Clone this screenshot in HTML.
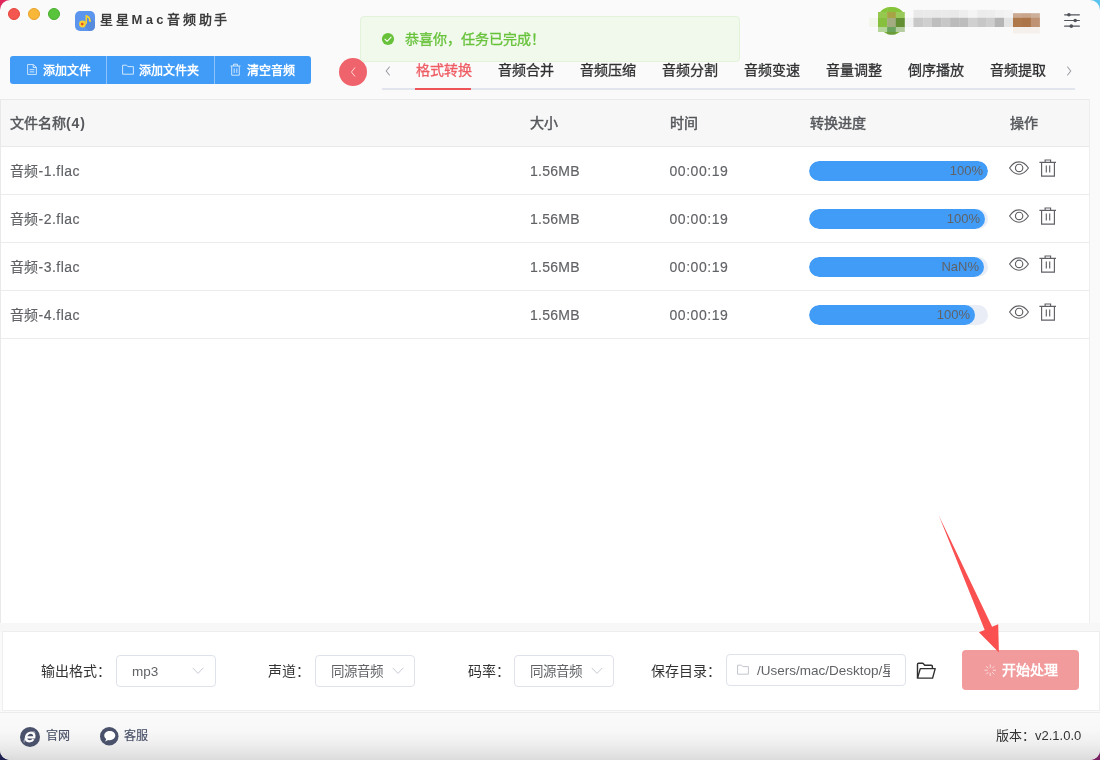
<!DOCTYPE html>
<html lang="zh-CN">
<head>
<meta charset="utf-8">
<title>星星Mac音频助手</title>
<style>
*{box-sizing:border-box;margin:0;padding:0}
html,body{width:1100px;height:760px;overflow:hidden}
body{font-family:"Liberation Sans",sans-serif;position:relative;background:#fafafa;color:#333}
.abs{position:absolute}
.t{position:absolute;white-space:nowrap;line-height:20px;height:20px}
/* desktop corners behind rounded window */
.corner{position:absolute;width:14px;height:14px}
#win{position:absolute;left:0;top:0;width:1100px;height:760px;border-radius:10px;background:#fafafa;overflow:hidden;will-change:transform}
.tl{position:absolute;top:8px;width:12px;height:12px;border-radius:50%}
/* toolbar buttons */
#btns{position:absolute;left:10px;top:56px;width:301px;height:28px;background:#419cf8;border-radius:3px}
#btns .sep{position:absolute;top:0;width:1px;height:28px;background:#8cc3f9}
#btns .t{color:#fff;font-size:12px;font-weight:bold;top:4.500px}
/* tabs */
.tab{position:absolute;top:60px;font-size:14px;-webkit-text-stroke:.3px;line-height:20px;white-space:nowrap;color:#303133}
/* table */
#table{position:absolute;left:0;top:99px;width:1090px;height:524px;background:#fff;border-left:1px solid #e9e9e9;border-right:1px solid #eeeeee}
#thead{position:absolute;left:0;top:0;width:1088px;height:48px;background:#f7f7f7;border-top:1px solid #e9e9eb;border-bottom:1px solid #e9e9eb}
.row{position:absolute;left:0;width:1088px;height:48px;border-bottom:1px solid #ececee}
.th{position:absolute;top:13px;font-size:14px;-webkit-text-stroke:.45px;color:#55575b;line-height:20px;white-space:nowrap}
.td{position:absolute;top:14px;font-size:14px;letter-spacing:.25px;-webkit-text-stroke:.15px;color:#606266;line-height:20px;white-space:nowrap}
.bar{position:absolute;left:808px;top:14px;width:179px;height:20px;border-radius:10px;background:#e9edf6;overflow:hidden}
.fill{position:absolute;left:0;top:0;height:20px;border-radius:10px;background:#419cf8}
.fill span{position:absolute;right:5px;top:0;line-height:20px;font-size:13px;color:#606266}
/* bottom panel */
#panel{position:absolute;left:2px;top:631px;width:1098px;height:80px;background:#fff;border:1px solid #eeeeee}
.lbl{position:absolute;font-size:14px;color:#333;line-height:20px;white-space:nowrap;top:29px}
.sel{position:absolute;top:23px;height:32px;border:1px solid #dfe2ea;border-radius:4px;background:#fff}
.sel .t{top:5.700px;font-size:13.500px;color:#606266}
#foot{position:absolute;left:0;top:712px;width:1100px;height:48px;border-top:1px solid #ececec;background:linear-gradient(#fafafa 0%,#f8f8f8 35%,#f0f0f0 62%,#e4e4e4 86%,#dbdbdb 100%)}
</style>
</head>
<body>
<div class="corner" style="left:0;top:0;background:#e0275d"></div>
<div class="corner" style="right:0;top:0;background:#5ac3ee"></div>
<div class="corner" style="left:0;bottom:0;background:#1e2050"></div>
<div class="corner" style="right:0;bottom:0;background:#7a1f62"></div>
<div id="win">

<!-- title bar -->
<div class="tl" style="left:8px;background:#f3574f;border:1px solid #e5453d"></div>
<div class="tl" style="left:28px;background:#f9b73a;border:1px solid #e6a229"></div>
<div class="tl" style="left:48px;background:#58c43c;border:1px solid #48ad2e"></div>
<svg class="abs" style="left:75px;top:11px" width="20" height="20" viewBox="0 0 20 20">
  <rect width="20" height="20" rx="5" fill="#5c95ee"/>
  <path d="M9.5 15.5 L12 4.5 L15.6 6.6 L20 11 L20 15 Q20 20 15 20 L14 20 Z" fill="#5588d8" opacity=".75"/>
  <path d="M10.5 4.3 L12 4 L12 12.8 L10.5 12.8 Z" fill="#f8d22f"/>
  <path d="M11.3 4 C13.6 4.6 15.8 6 15.9 10.9 C15.3 11.4 14.2 11 13.9 10.1 C14.2 7.6 13.2 6.6 11.6 6.5 Z" fill="#f8d22f"/>
  <circle cx="7.5" cy="13" r="3.4" fill="#f8d22f"/>
  <circle cx="7.2" cy="13.1" r="1.3" fill="#e8452a"/>
</svg>
<div class="t" style="left:100px;top:10px;font-size:13px;font-weight:bold;letter-spacing:2.75px;color:#3c3c3c">星星<span style="letter-spacing:3.4px">Mac</span>音频助手</div>

<!-- avatar / user (pixelated) -->
<svg class="abs" style="left:866px;top:5px" width="42" height="32" viewBox="0 0 42 32">
  <defs><clipPath id="avc"><path d="M12 7H14.200C17 3.200 21 1.900 25.500 1.900C30 1.900 34 3.200 36.900 7H38.800V27H33.600C31 29 28.500 29.800 25.800 29.800C23 29.800 20.500 29 18 27H12Z"/></clipPath></defs>
  <rect x="3" y="13" width="9" height="9" fill="#f3f6ea"/>
  <g clip-path="url(#avc)"><rect x="12.0" y="1.5" width="9.4" height="5.7" fill="#86c43a"/><rect x="21.1" y="1.5" width="9.0" height="5.7" fill="#86c43a"/><rect x="29.8" y="1.5" width="9.3" height="5.7" fill="#86c43a"/><rect x="12.0" y="6.9" width="9.4" height="6.4" fill="#96c850"/><rect x="21.1" y="6.9" width="9.0" height="6.4" fill="#a8a445"/><rect x="29.8" y="6.9" width="9.3" height="6.4" fill="#9aca5c"/><rect x="12.0" y="13.0" width="9.4" height="9.3" fill="#86c03c"/><rect x="21.1" y="13.0" width="9.0" height="9.3" fill="#a3ac80"/><rect x="29.8" y="13.0" width="9.3" height="9.3" fill="#648f32"/><rect x="12.0" y="22.0" width="9.4" height="5.3" fill="#b4d698"/><rect x="21.1" y="22.0" width="9.0" height="5.3" fill="#6aa45c"/><rect x="29.8" y="22.0" width="9.3" height="5.3" fill="#b4cca0"/><rect x="12.0" y="27.0" width="9.4" height="3.5" fill="#7ab030"/><rect x="21.1" y="27.0" width="9.0" height="3.5" fill="#6a9c3a"/><rect x="29.8" y="27.0" width="9.3" height="3.5" fill="#7ab030"/></g>
</svg>
<svg class="abs" style="left:904px;top:9px" width="138" height="26" viewBox="0 0 138 26"><rect x="1" y="8.8" width="9" height="9.200" fill="#f1f1f1"/><rect x="9.5" y="0.9" width="10.1" height="8.200" fill="#e9e9e9"/><rect x="9.5" y="8.8" width="10.1" height="9.200" fill="#c8c8c8"/><rect x="19.3" y="0.9" width="9.0" height="8.200" fill="#eaeaea"/><rect x="19.3" y="8.8" width="9.0" height="9.200" fill="#cfcfcf"/><rect x="28.0" y="0.9" width="9.5" height="8.200" fill="#e9e9e9"/><rect x="28.0" y="8.8" width="9.5" height="9.200" fill="#bebebe"/><rect x="37.2" y="0.9" width="9.2" height="8.200" fill="#eaeaea"/><rect x="37.2" y="8.8" width="9.2" height="9.200" fill="#c7c7c7"/><rect x="46.1" y="0.9" width="9.5" height="8.200" fill="#e9e9e9"/><rect x="46.1" y="8.8" width="9.5" height="9.200" fill="#bbbbbb"/><rect x="55.3" y="0.9" width="9.0" height="8.200" fill="#eeeeee"/><rect x="55.3" y="8.8" width="9.0" height="9.200" fill="#bdbdbd"/><rect x="64.0" y="0.9" width="9.5" height="8.200" fill="#f4f4f4"/><rect x="64.0" y="8.8" width="9.5" height="9.200" fill="#d0d0d0"/><rect x="73.2" y="0.9" width="9.2" height="8.200" fill="#ececec"/><rect x="73.2" y="8.8" width="9.2" height="9.200" fill="#c7c7c7"/><rect x="82.1" y="0.9" width="9.0" height="8.200" fill="#ededed"/><rect x="82.1" y="8.8" width="9.0" height="9.200" fill="#cecece"/><rect x="90.8" y="0.9" width="9.5" height="8.200" fill="#f1f1f1"/><rect x="90.8" y="8.8" width="9.5" height="9.200" fill="#b5b5b5"/><rect x="100.0" y="0.9" width="9.0" height="8.200" fill="#f3f3f3"/><rect x="100.0" y="8.8" width="9.0" height="9.200" fill="#e4e4e4"/><rect x="109.0" y="4.2" width="9.2" height="4.900" fill="#cba990"/><rect x="109.0" y="8.8" width="9.2" height="9.200" fill="#af784b"/><rect x="109.0" y="18.0" width="9.2" height="6.500" fill="#f5f0ec"/><rect x="117.9" y="4.2" width="9.2" height="4.900" fill="#c9a58c"/><rect x="117.9" y="8.8" width="9.2" height="9.200" fill="#ad7547"/><rect x="117.9" y="18.0" width="9.2" height="6.500" fill="#f5f0ec"/><rect x="126.8" y="4.2" width="9.1" height="4.900" fill="#cdb09c"/><rect x="126.8" y="8.8" width="9.1" height="9.200" fill="#be9272"/><rect x="126.8" y="18.0" width="9.1" height="6.500" fill="#f5f0ec"/></svg>
<!-- settings sliders icon -->
<svg class="abs" style="left:1063px;top:11px" width="18" height="18" viewBox="0 0 18 18" fill="none" stroke="#50535a" stroke-width="1.150" stroke-linecap="round">
  <path d="M1.600 3.800H16.400M1.600 9.450H16.400M1.600 15.150H16.400"/>
  <circle cx="5.900" cy="3.800" r="1.800" fill="#50535a" stroke="none"/>
  <circle cx="12.200" cy="9.450" r="1.800" fill="#50535a" stroke="none"/>
  <circle cx="8.300" cy="15.150" r="1.800" fill="#50535a" stroke="none"/>
</svg>

<!-- toolbar buttons -->
<div id="btns">
  <div class="sep" style="left:96px"></div>
  <div class="sep" style="left:204px"></div>
  <svg class="abs" style="left:17px;top:8px" width="10" height="11" preserveAspectRatio="none" viewBox="0 0 10 12" fill="none" stroke="#e8f3fe" stroke-width=".85"><path d="M.6.6H6.4L9.4 3.6V11.4H.6Z"/><path d="M6.2.8V3.8H9.2M2.6 6.2H7.4M2.6 8.6H7.4" stroke-width=".9"/></svg>
  <div class="t" style="left:33px">添加文件</div>
  <svg class="abs" style="left:112px;top:8px" width="12" height="11" viewBox="0 0 12 11" fill="none" stroke="#e8f3fe" stroke-width=".85"><path d="M.6 1.2H4.6L5.8 2.6H11.4V10.2H.6Z"/></svg>
  <div class="t" style="left:129px">添加文件夹</div>
  <svg class="abs" style="left:220px;top:7px" width="11" height="13" viewBox="0 0 11 13" fill="none" stroke="#e8f3fe" stroke-width=".85"><path d="M.5 3H10.5M3.6 3V1.2H7.4V3M1.7 3.2V12.2H9.3V3.2M4.2 5.4V10M6.8 5.4V10"/></svg>
  <div class="t" style="left:237px">清空音频</div>
</div>

<!-- collapse round button -->
<div class="abs" style="left:339px;top:58px;width:28px;height:28px;border-radius:50%;background:#ef646c"></div>
<svg class="abs" style="left:348.700px;top:65.600px" width="8" height="12" viewBox="0 0 8 12" fill="none" stroke="#fde4e5" stroke-width=".9" stroke-linecap="round" stroke-linejoin="round"><path d="M5.800 1.800L2.400 6L5.800 10.200"/></svg>

<!-- tabs -->
<div class="abs" style="left:382px;top:88px;width:693px;height:2px;background:#e2e5ee"></div>
<div class="abs" style="left:415px;top:88px;width:56px;height:2px;background:#ee5358"></div>
<svg class="abs" style="left:384px;top:65px" width="8" height="12" viewBox="0 0 8 12" fill="none" stroke="#9a9da3" stroke-width="1.1" stroke-linecap="round" stroke-linejoin="round"><path d="M5.400 2L2.200 6L5.400 10"/></svg>
<svg class="abs" style="left:1065px;top:65px" width="8" height="12" viewBox="0 0 8 12" fill="none" stroke="#9a9da3" stroke-width="1.1" stroke-linecap="round" stroke-linejoin="round"><path d="M2.600 2L5.800 6L2.600 10"/></svg>
<div class="tab" style="left:416px;color:#ee5c64">格式转换</div>
<div class="tab" style="left:498px">音频合并</div>
<div class="tab" style="left:580px">音频压缩</div>
<div class="tab" style="left:662px">音频分割</div>
<div class="tab" style="left:744px">音频变速</div>
<div class="tab" style="left:826px">音量调整</div>
<div class="tab" style="left:908px">倒序播放</div>
<div class="tab" style="left:990px">音频提取</div>

<!-- success message -->
<div class="abs" style="left:360px;top:16px;width:380px;height:46px;background:#f0f9eb;border:1px solid #e3f3d9;border-radius:4px"></div>
<svg class="abs" style="left:381px;top:32.3px" width="14" height="14" viewBox="0 0 14 14"><circle cx="7" cy="7" r="6.1" fill="#67c23a"/><path d="M3.9 7.2L6.1 9.3L10.1 5.2" fill="none" stroke="#fff" stroke-width="1.050" stroke-linecap="round" stroke-linejoin="round"/></svg>
<div class="t" style="left:405px;top:29px;font-size:14px;-webkit-text-stroke:.3px;color:#67c23a">恭喜你，任务已完成！</div>

<!-- table -->
<div id="table">
  <div id="thead">
    <div class="th" style="left:9px">文件名称<span style="letter-spacing:.9px;font-weight:bold;-webkit-text-stroke:0">(4)</span></div>
    <div class="th" style="left:529px">大小</div>
    <div class="th" style="left:669px">时间</div>
    <div class="th" style="left:809px">转换进度</div>
    <div class="th" style="left:1009px">操作</div>
  </div>
  <div class="row" style="top:48px">
    <div class="td" style="left:8.500px;letter-spacing:.5px">音频-1.flac</div>
    <div class="td" style="left:529px">1.56MB</div>
    <div class="td" style="left:668.500px;letter-spacing:.55px">00:00:19</div>
    <div class="bar"><div class="fill" style="width:179px"><span>100%</span></div></div>
    <svg class="abs" style="left:1008px;top:14px" width="20" height="14" viewBox="0 0 20 14" fill="none" stroke="#5f6166" stroke-width="1.150"><path d="M.600 7C3.500 2.600 6.600 .800 10 .800S16.500 2.600 19.400 7C16.500 11.400 13.400 13.200 10 13.200S3.500 11.400 .600 7Z"/><circle cx="10.100" cy="6.900" r="3.700"/></svg>
    <svg class="abs" style="left:1038px;top:12px" width="18" height="18" viewBox="0 0 18 18" fill="none" stroke="#5f6166" stroke-width="1.150"><path d="M.400 3.300H17M6.100 3.200V1H11.600V3.200M2.600 3.500V17.100H15.400V3.500M7.300 6.500V13.500M10.700 6.500V13.500"/></svg>
  </div>
  <div class="row" style="top:96px">
    <div class="td" style="left:8.500px;letter-spacing:.5px">音频-2.flac</div>
    <div class="td" style="left:529px">1.56MB</div>
    <div class="td" style="left:668.500px;letter-spacing:.55px">00:00:19</div>
    <div class="bar"><div class="fill" style="width:176px"><span>100%</span></div></div>
    <svg class="abs" style="left:1008px;top:14px" width="20" height="14" viewBox="0 0 20 14" fill="none" stroke="#5f6166" stroke-width="1.150"><path d="M.600 7C3.500 2.600 6.600 .800 10 .800S16.500 2.600 19.400 7C16.500 11.400 13.400 13.200 10 13.200S3.500 11.400 .600 7Z"/><circle cx="10.100" cy="6.900" r="3.700"/></svg>
    <svg class="abs" style="left:1038px;top:12px" width="18" height="18" viewBox="0 0 18 18" fill="none" stroke="#5f6166" stroke-width="1.150"><path d="M.400 3.300H17M6.100 3.200V1H11.600V3.200M2.600 3.500V17.100H15.400V3.500M7.300 6.500V13.500M10.700 6.500V13.500"/></svg>
  </div>
  <div class="row" style="top:144px">
    <div class="td" style="left:8.500px;letter-spacing:.5px">音频-3.flac</div>
    <div class="td" style="left:529px">1.56MB</div>
    <div class="td" style="left:668.500px;letter-spacing:.55px">00:00:19</div>
    <div class="bar"><div class="fill" style="width:175px"><span>NaN%</span></div></div>
    <svg class="abs" style="left:1008px;top:14px" width="20" height="14" viewBox="0 0 20 14" fill="none" stroke="#5f6166" stroke-width="1.150"><path d="M.600 7C3.500 2.600 6.600 .800 10 .800S16.500 2.600 19.400 7C16.500 11.400 13.400 13.200 10 13.200S3.500 11.400 .600 7Z"/><circle cx="10.100" cy="6.900" r="3.700"/></svg>
    <svg class="abs" style="left:1038px;top:12px" width="18" height="18" viewBox="0 0 18 18" fill="none" stroke="#5f6166" stroke-width="1.150"><path d="M.400 3.300H17M6.100 3.200V1H11.600V3.200M2.600 3.500V17.100H15.400V3.500M7.300 6.500V13.500M10.700 6.500V13.500"/></svg>
  </div>
  <div class="row" style="top:192px">
    <div class="td" style="left:8.500px;letter-spacing:.5px">音频-4.flac</div>
    <div class="td" style="left:529px">1.56MB</div>
    <div class="td" style="left:668.500px;letter-spacing:.55px">00:00:19</div>
    <div class="bar"><div class="fill" style="width:166px"><span>100%</span></div></div>
    <svg class="abs" style="left:1008px;top:14px" width="20" height="14" viewBox="0 0 20 14" fill="none" stroke="#5f6166" stroke-width="1.150"><path d="M.600 7C3.500 2.600 6.600 .800 10 .800S16.500 2.600 19.400 7C16.500 11.400 13.400 13.200 10 13.200S3.500 11.400 .600 7Z"/><circle cx="10.100" cy="6.900" r="3.700"/></svg>
    <svg class="abs" style="left:1038px;top:12px" width="18" height="18" viewBox="0 0 18 18" fill="none" stroke="#5f6166" stroke-width="1.150"><path d="M.400 3.300H17M6.100 3.200V1H11.600V3.200M2.600 3.500V17.100H15.400V3.500M7.300 6.500V13.500M10.700 6.500V13.500"/></svg>
  </div>
</div>
<div class="abs" style="left:0;top:622.500px;width:1100px;height:9px;background:#f7f7f7"></div>

<!-- bottom panel -->
<div id="panel">
  <div class="lbl" style="left:38px">输出格式：</div>
  <div class="sel" style="left:113px;width:100px"><div class="t" style="left:15px">mp3</div>
    <svg class="abs" style="left:75px;top:11px" width="12" height="8" viewBox="0 0 12 8" fill="none" stroke="#c6cad2" stroke-width="1" stroke-linecap="round" stroke-linejoin="round"><path d="M1 1.2L6 6.4L11 1.2"/></svg></div>
  <div class="lbl" style="left:265px">声道：</div>
  <div class="sel" style="left:312px;width:100px"><div class="t" style="left:15px">同源音频</div>
    <svg class="abs" style="left:76px;top:11px" width="12" height="8" viewBox="0 0 12 8" fill="none" stroke="#c6cad2" stroke-width="1" stroke-linecap="round" stroke-linejoin="round"><path d="M1 1.2L6 6.4L11 1.2"/></svg></div>
  <div class="lbl" style="left:465px">码率：</div>
  <div class="sel" style="left:511px;width:100px"><div class="t" style="left:15px">同源音频</div>
    <svg class="abs" style="left:76px;top:11px" width="12" height="8" viewBox="0 0 12 8" fill="none" stroke="#c6cad2" stroke-width="1" stroke-linecap="round" stroke-linejoin="round"><path d="M1 1.2L6 6.4L11 1.2"/></svg></div>
  <div class="lbl" style="left:648px">保存目录：</div>
  <div class="sel" style="left:723px;top:22px;width:180px;overflow:hidden">
    <svg class="abs" style="left:10px;top:8.500px" width="12" height="11" viewBox="0 0 12 11" fill="none" stroke="#c2c6cd" stroke-width="1"><path d="M.6 1.2H4.6L5.8 2.6H11.4V10.2H.6Z"/></svg>
    <div class="t" style="left:30px;top:6.200px;width:132.500px;overflow:hidden">/Users/mac/Desktop/星星</div></div>
  <svg class="abs" style="left:912.500px;top:29.500px" width="20.500" height="17.500" preserveAspectRatio="none" viewBox="0 0 22 18" fill="none" stroke="#2f2f2f" stroke-width="1.5" stroke-linejoin="round"><path d="M1.6 16.4V2.4Q1.6 1.2 2.8 1.2H7.4L9.4 3.4H16.4Q17.6 3.4 17.6 4.6V6.6"/><path d="M1.6 16.6L4.6 6.8H20.6L17.8 16.6Z"/></svg>
  <div class="abs" style="left:959px;top:18px;width:117px;height:40px;border-radius:4px;background:#f29b9d"></div>
  <svg class="abs" style="left:980.500px;top:32px" width="12.500" height="12.500" viewBox="0 0 14 14" stroke="#fbdcdd" stroke-width="1.1" stroke-linecap="round"><path d="M7 1V3.6M7 10.4V13M1 7H3.6M10.4 7H13M2.8 2.8L4.6 4.6M9.4 9.4L11.2 11.2M2.8 11.2L4.6 9.4M9.4 4.6L11.2 2.8"/></svg>
  <div class="t" style="left:999px;top:28px;font-size:14px;font-weight:bold;color:#fff">开始处理</div>
</div>

<!-- footer -->
<div id="foot">
  <svg class="abs" style="left:20px;top:13.5px" width="20" height="20" viewBox="0 0 20 20"><circle cx="10" cy="10" r="10" fill="#4a526b"/><g transform="translate(1.600 0) skewX(-9)"><path d="M6.400 10.300H14.300C14.400 7.500 12.700 5.700 10.200 5.700C7.700 5.700 6 7.500 6 10C6 12.600 7.700 14.300 10.200 14.300C12 14.300 13.300 13.500 13.900 12.300" fill="none" stroke="#fff" stroke-width="2.300"/></g><path d="M4.200 15.400C3.600 13 6 9.400 9.400 6.800C12.400 4.600 14.900 4.500 15.400 5.800" fill="none" stroke="#e6e8ee" stroke-width=".8"/></svg>
  <div class="t" style="left:45.500px;top:13px;font-size:12px;-webkit-text-stroke:.2px;color:#4a5269">官网</div>
  <svg class="abs" style="left:100px;top:14.2px" width="18.500" height="18.500" viewBox="0 0 20 20"><circle cx="10" cy="10" r="10" fill="#4a526b"/><path d="M10.600 4.400C7.200 4.400 4.600 6.500 4.600 9.300C4.600 10.800 5.400 12.100 6.700 13L5.600 15.600L8.900 14C9.400 14.100 10 14.200 10.600 14.200C14 14.200 16.500 12.100 16.500 9.300S14 4.400 10.600 4.400Z" fill="#fff"/></svg>
  <div class="t" style="left:123.500px;top:13px;font-size:12px;-webkit-text-stroke:.2px;color:#4a5269">客服</div>
  <div class="t" style="left:996px;top:12.5px;font-size:13px;color:#333">版本：v2.1.0.0</div>
</div>

<!-- annotation arrow -->
<svg class="abs" style="left:930px;top:510px" width="80" height="150" viewBox="930 510 80 150"><path d="M938.8 515.5L984.7 630L978.900 632.300L998.900 652.600L998.200 624.200L992.100 626.800Z" fill="#fa5050"/></svg>

</div>
</body>
</html>
